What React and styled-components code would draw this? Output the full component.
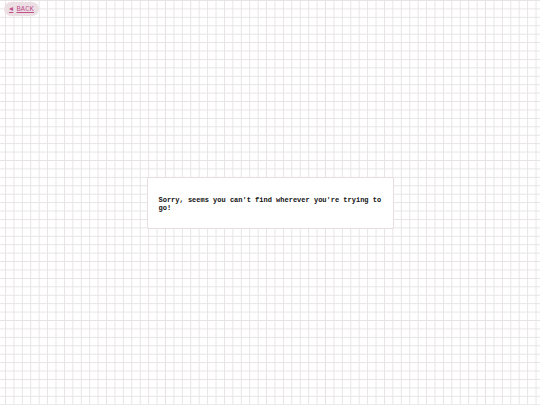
import React from "react";
import styled, { createGlobalStyle } from "styled-components";

const GlobalStyle = createGlobalStyle`
  html, body {
    margin: 0;
    padding: 0;
  }
  body {
    background-color: #fff;
    background-image:
      linear-gradient(to right, #e7e3e5 1px, transparent 1px),
      linear-gradient(to bottom, #e7e3e5 1px, transparent 1px);
    background-size: 8.43px 8.43px;
    background-position: 5px 0px;
    font-family: "Liberation Mono", monospace;
  }
`;

const Page = styled.div`
  position: relative;
  width: 540px;
  height: 405px;
  display: flex;
  align-items: center;
  justify-content: center;
`;

const BackButton = styled.a`
  position: absolute;
  top: 2px;
  left: 4px;
  height: 14px;
  padding: 0 5px;
  display: flex;
  align-items: center;
  gap: 3px;
  border-radius: 7px;
  background: #ebdfe4;
  color: #c0508a;
  font-family: "Liberation Mono", monospace;
  font-size: 7px;
  text-decoration: underline;
  letter-spacing: 0.2px;
  cursor: pointer;
`;

const Card = styled.div`
  width: 223px;
  padding: 18px 11px 16px;
  background: #fff;
  border: 1px solid #e6dde1;
  border-radius: 2px;
`;

const Message = styled.p`
  margin: 0;
  font-family: "Liberation Mono", monospace;
  font-weight: bold;
  font-size: 7px;
  line-height: 8px;
  color: #111;
`;

const App = () => {
  return (
    <>
      <GlobalStyle />
      <Page>
        <BackButton>
          <span>◄</span>
          <span>BACK</span>
        </BackButton>
        <Card>
          <Message>
            Sorry, seems you can't find wherever you're trying to go!
          </Message>
        </Card>
      </Page>
    </>
  );
};

export default App;
